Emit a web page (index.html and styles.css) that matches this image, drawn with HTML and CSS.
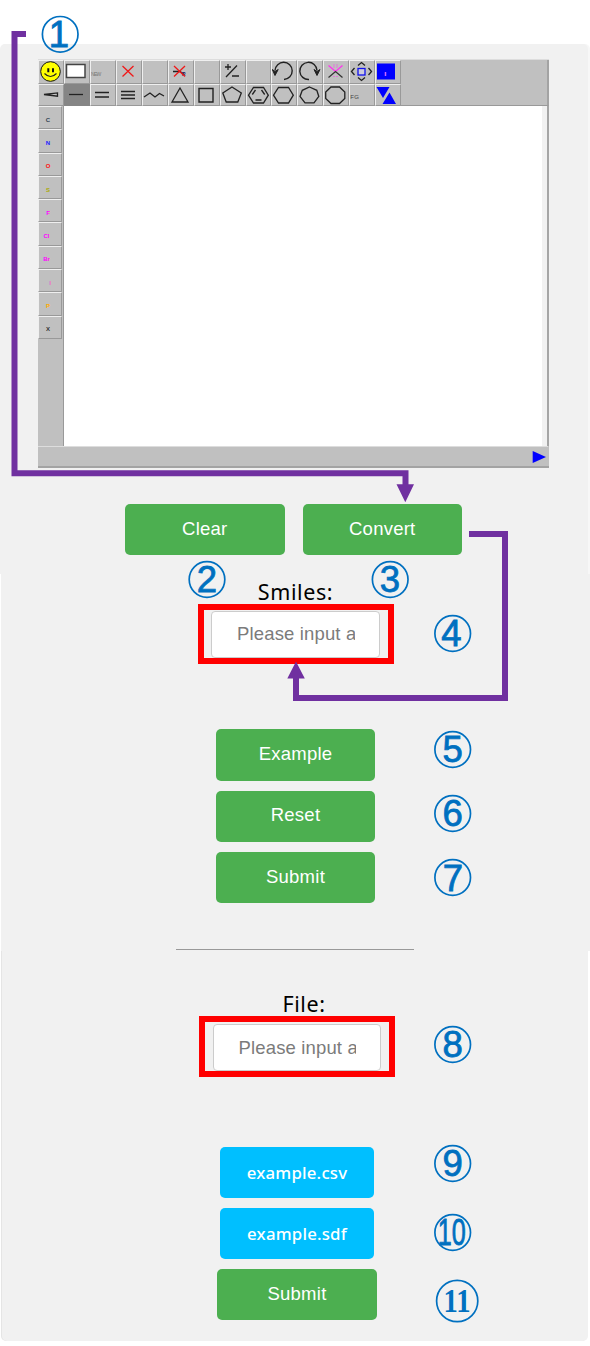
FILE: index.html
```html
<!DOCTYPE html>
<html lang="en">
<head>
<meta charset="utf-8">
<title>Structure input</title>
<link rel="stylesheet" href="styles.css">
</head>
<body>
<main class="page">
  <section class="panel draw">
    <div class="editor">
      <div class="toolbar">
        <div class="cell"><svg viewBox="0 0 26 23"><circle cx="11.500" cy="10.500" r="9.800" fill="#ff0" stroke="#111"/><path d="M9.300 7.300v4M14 7.300v4" stroke="#111" stroke-width="2"/><path d="M5.500 12.500q6 6 12 0" fill="none" stroke="#222" stroke-width="1.100"/></svg></div>
        <div class="cell"><svg viewBox="0 0 26 23"><rect x="1.500" y="3.500" width="18.500" height="13" fill="#fff" stroke="#444" stroke-width="1.500"/></svg></div>
        <div class="cell"><span class="tiny new">NEW</span></div>
        <div class="cell"><svg viewBox="0 0 26 23"><path d="M5.500 5l11 10.500M16.500 5l-11 10.500" stroke="#f01818" stroke-width="1.300"/></svg></div>
        <div class="cell"></div>
        <div class="cell"><svg viewBox="0 0 26 23"><path d="M4 10.500h7l4 3" fill="none" stroke="#222" stroke-width="1.300"/><text x="13" y="15" font-size="5" fill="#226">R</text><path d="M5 5l11 10.500M16 5L5 15.500" stroke="#f01818" stroke-width="1.300"/></svg></div>
        <div class="cell"></div>
        <div class="cell"><svg viewBox="0 0 26 23"><path d="M5 16L16 4.500M4 6h6M7 3v6M11 15h7" stroke="#222" stroke-width="1.300"/></svg></div>
        <div class="cell"></div>
        <div class="cell"><svg viewBox="0 0 26 23"><path d="M12 18.500A8.600 8.600 0 1 0 3 9.500" fill="none" stroke="#222" stroke-width="1.400"/><path d="M.3 8.500l2.700 6 3.200-6-3.200 2z" fill="#222" stroke="#222"/></svg></div>
        <div class="cell"><svg viewBox="0 0 26 23"><path d="M11 18.500A8.600 8.600 0 1 1 19 9.500" fill="none" stroke="#222" stroke-width="1.400"/><path d="M16 8.500l3 6 3-6-3 2z" fill="#222" stroke="#222"/></svg></div>
        <div class="cell"><svg viewBox="0 0 26 23"><path d="M4.500 4.500l7 6 7-6" fill="none" stroke="#f3e" stroke-width="1.300"/><path d="M4.500 16.500l7-6 7 6" fill="none" stroke="#333" stroke-width="1.300"/><path d="M10 3.500v3M13 3.500v3M10 15v2M13 15v2" stroke="#f3e" stroke-dasharray="1 1"/></svg></div>
        <div class="cell"><svg viewBox="0 0 26 23"><rect x="8" y="7.500" width="7" height="6.500" fill="#ccd" stroke="#11e" stroke-width="1.300"/><path d="M8 4.500l3.500-3 3.500 3M8 16.500l3.500 3 3.500-3M4.500 7L1.500 10.500l3 3.500M18.500 7l3 3.500-3 3.500" fill="none" stroke="#222" stroke-width="1.300"/></svg></div>
        <div class="cell"><svg viewBox="0 0 26 23"><path d="M1 2.500h18V18.500H1z" fill="#00f"/><path d="M9.500 11v4" stroke="#c6f" stroke-width="1.500"/></svg></div>

        <div class="cell"><svg viewBox="0 0 26 23"><path d="M5 9.500l13.500-1.600v3.300z" fill="none" stroke="#222" stroke-width="1.300"/></svg></div>
        <div class="cell active"><svg viewBox="0 0 26 23"><path d="M4 9.500h14" stroke="#222" stroke-width="1.300"/></svg></div>
        <div class="cell"><svg viewBox="0 0 26 23"><path d="M4 7.500h14M4 12h14" stroke="#222" stroke-width="1.300"/></svg></div>
        <div class="cell"><svg viewBox="0 0 26 23"><path d="M4 6.500h14M4 10h14M4 13.500h14" stroke="#222" stroke-width="1.300"/></svg></div>
        <div class="cell"><svg viewBox="0 0 26 23"><path d="M1 12l6-4 5 4 4.500-3.500 4.500 2.500" fill="none" stroke="#222" stroke-width="1.300"/></svg></div>
        <div class="cell"><svg viewBox="0 0 26 23"><path d="M11 3l8 14H3z" fill="none" stroke="#222" stroke-width="1.300"/></svg></div>
        <div class="cell"><svg viewBox="0 0 26 23"><path d="M4 3.500h14V17H4z" fill="none" stroke="#222" stroke-width="1.400"/></svg></div>
        <div class="cell"><svg viewBox="0 0 26 23"><path d="M11 2l9.300 6-3.500 9H5.200L1.800 8z" fill="none" stroke="#222" stroke-width="1.300"/></svg></div>
        <div class="cell"><svg viewBox="0 0 26 23"><path d="M6.500 2.500h10l4.800 7.700-4.800 7.800h-10l-5-7.800zM5.300 9.500L8.500 5M14.500 5l3.200 4.500M8.500 15h6" fill="none" stroke="#222" stroke-width="1.300"/></svg></div>
        <div class="cell"><svg viewBox="0 0 26 23"><path d="M6.500 2.500h10l4.800 7.700-4.800 7.800h-10l-5-7.800z" fill="none" stroke="#222" stroke-width="1.300"/></svg></div>
        <div class="cell"><svg viewBox="0 0 26 23"><path d="M11.500 2l7.300 3.300 2 6.200-4.800 6.300H7l-5-6.300L4.300 5.300z" fill="none" stroke="#222" stroke-width="1.300"/></svg></div>
        <div class="cell"><svg viewBox="0 0 26 23"><path d="M7 2h8.500l5.300 5v6.500l-5.300 5H7l-5.300-5V7z" fill="none" stroke="#222" stroke-width="1.300"/></svg></div>
        <div class="cell"><span class="tiny fg">FG</span></div>
        <div class="cell"><svg viewBox="0 0 26 23"><path d="M.500 2H13.500L7 13zM6.500 19h13.500L13.500 7.500z" fill="#00f"/></svg></div>
      </div>
      <div class="work">
        <div class="atoms">
          <div class="cell atom c">C</div>
          <div class="cell atom n">N</div>
          <div class="cell atom o">O</div>
          <div class="cell atom s">S</div>
          <div class="cell atom f">F</div>
          <div class="cell atom cl">Cl</div>
          <div class="cell atom br">Br</div>
          <div class="cell atom i">I</div>
          <div class="cell atom p">P</div>
          <div class="cell atom x">X</div>
        </div>
        <div class="canvas"></div>
      </div>
      <div class="status"><svg viewBox="0 0 14 12"><path d="M.700 0l13.300 6-13.300 6z" fill="#00f"/></svg></div>
    </div>
    <div class="actions">
      <button class="btn">Clear</button>
      <button class="btn">Convert</button>
    </div>
  </section>
  <section class="panel smiles">
    <label class="label smiles-label">Smiles:</label>
    <div class="marked"><div class="field"><span>Please input a</span></div></div>
    <div class="stack">
      <button class="btn">Example</button>
      <button class="btn">Reset</button>
      <button class="btn">Submit</button>
    </div>
    <div class="rule"></div>
  </section>
  <section class="panel file">
    <label class="label file-label">File:</label>
    <div class="marked"><div class="field"><span>Please input a</span></div></div>
    <div class="stack">
      <a class="btn link">example.csv</a>
      <a class="btn link">example.sdf</a>
      <button class="btn">Submit</button>
    </div>
  </section>

  <svg class="notes" viewBox="0 0 590 1346">
    <g fill="none" stroke="#7030a0" stroke-width="6">
      <path d="M26 34H14.500V473.300H405.500V487"/>
      <path d="M469 534H505V698H296V676"/>
    </g>
    <path d="M396.500 484.300h17.500L405.300 502.300zM287.300 678.500h17.500L296 661.500z" fill="#7030a0"/>
    <g class="rings">
      <circle cx="60.200" cy="34.300" r="17.800"/><circle cx="207" cy="579.500" r="17.800"/><circle cx="390.200" cy="579.500" r="17.800"/>
      <circle cx="452.700" cy="633.500" r="17.800"/><circle cx="452.700" cy="749.500" r="17.800"/><circle cx="452.700" cy="813.500" r="17.800"/>
      <circle cx="452.700" cy="877.500" r="17.800"/><circle cx="452.700" cy="1044.500" r="17.800"/><circle cx="452.700" cy="1163.500" r="17.800"/>
      <circle cx="452.700" cy="1232.500" r="17.800"/><circle cx="457.200" cy="1301" r="20.600"/>
    </g>
    <g class="digits">
      <text x="59" y="47.300">1</text><text x="207" y="591.700">2</text><text x="390" y="591.700">3</text>
      <text x="451.500" y="646">4</text><text x="452.700" y="762">5</text><text x="452.700" y="826">6</text>
      <text x="452.900" y="890.500">7</text><text x="452.700" y="1057">8</text><text x="452.700" y="1176">9</text>
      <text x="451.700" y="1245.300" textLength="28" lengthAdjust="spacingAndGlyphs">10</text>
      <text class="serif" x="457" y="1312.300" textLength="27" lengthAdjust="spacingAndGlyphs">11</text>
    </g>
  </svg>
</main>
</body>
</html>
```
FILE: styles.css
```css
* { box-sizing: border-box; }
body { margin: 0; background: #fff; font-family: "Liberation Sans", Arial, sans-serif; }
.page { position: relative; width: 590px; height: 1346px; padding-top: 44px; overflow: hidden; }
.panel { display: flex; flex-direction: column; background: #f1f1f1; }
.draw { width: 588px; height: 530px; padding-top: 15px; border-radius: 5px 5px 0 0; box-shadow: 2px 0 0 #f7f7f7; }
.smiles { height: 377px; margin-left: 1px; align-items: center; padding: 3px 0 0; }
.file { width: 586px; height: 390px; margin-left: 2px; align-items: center; border-radius: 0 0 5px 5px; box-shadow: -1px 0 0 #e5e5e5; }

.editor { width: 511px; height: 409px; margin-left: 38px; background: #c0c0c0; border-top: 1px solid #ddd; border-bottom: 2px solid #a3a3a3; display: flex; flex-direction: column; }
.toolbar { height: 46px; display: grid; grid-template-columns: repeat(14, 25.950px); grid-template-rows: 23.5px 22.5px; border-right: 2px solid #a3a3a3; border-bottom: 1px solid #999; }
.cell { border: 1px solid #efefef; border-right: 1px solid #999; border-bottom: 1px solid #999; overflow: hidden; display: flex; }
.cell svg { width: 26px; height: 23px; flex: none; }
.cell svg text { font-weight: bold; }
.active { background: #858585; border-color: #858585; }
.tiny { font-size: 5px; line-height: 6px; color: #777; }
.new { padding: 9.500px 0 0 0; letter-spacing: -.6px; }
.fg { padding: 9px 0 0 0; color: #444; font-size: 6px; }
.work { display: flex; height: 340px; }
.atoms { width: 26px; padding-right: 1px; border-right: 1px solid #999; display: grid; grid-template-rows: repeat(10, 23.300px); }
.atom { justify-content: center; align-items: center; font-size: 6px; font-weight: bold; padding: 4px 4px 0 0; }
.c { color: #345; } .n { color: #22f; } .o { color: #f11; } .s { color: #aa0; }
.f, .cl, .br { color: #f0f; } .cl, .br { padding-right: 7px; }
.i { color: #e6c; padding-right: 0; } .p { color: #fa0; } .x { color: #333; }
.canvas { flex: 1; background: #fff; border-right: 2px solid #a5a5a5; box-shadow: inset -5px 0 0 #f1f1f1; }
.status { flex: 1; display: flex; justify-content: flex-end; align-items: center; padding-right: 2px; border-top: 1px solid #ddd; margin-right: 1px; }
.status svg { width: 14px; height: 12px; }

.actions { display: flex; gap: 18px; margin: 36px 0 0 125px; }
.btn { width: 159.500px; height: 51.300px; padding: 0 0 2px; border: 0; border-radius: 5px; background: #4caf50; color: #fff; font: 18.500px "Liberation Sans", Arial, sans-serif; letter-spacing: .25px; text-align: center; }
.link { width: 154.500px; background: #00bfff; font: 500 16.800px/52px "Noto Sans", "Open Sans", sans-serif; letter-spacing: .2px; }
.label { font: 21.500px/30px "Noto Sans", "Open Sans", sans-serif; color: #000; height: 30px; letter-spacing: .6px; }
.smiles-label { height: 27px; }
.marked { width: 196px; height: 60px; border: 6px solid #f00; padding: 1px 8px 0 7.500px; }
.field { width: 168.500px; height: 47px; border: 1px solid #ccc; border-radius: 4px; background: #fff; padding: 0 24px 0 25px; }
.field span { display: block; overflow: hidden; width: 117.500px; white-space: nowrap; color: #7b7b7b; font-size: 18.500px; line-height: 43px; letter-spacing: .15px; }
.stack { display: flex; flex-direction: column; align-items: center; gap: 10px; margin-top: 65.300px; }
.rule { width: 238px; height: 1px; margin: 46px 1px 0 0; background: #999; }
.file .label { margin: 38px 0 0 18px; height: 27px; }
.file .marked { height: 61px; width: 196px; margin-left: 4px; padding-top: 2px; }
.file .field span { line-height: 45px; }
.file .stack { margin-top: 69.500px; margin-left: 4px; }

.fg { letter-spacing: .3px; }
.notes { position: absolute; left: 0; top: 0; width: 590px; height: 1346px; pointer-events: none; }
.rings { fill: none; stroke: #0070c0; stroke-width: 1.700; }
.digits { fill: #0070c0; stroke: #0070c0; stroke-width: .8; font: 36.500px "Liberation Sans", Arial, sans-serif; text-anchor: middle; }
.serif { font: bold 33px "Liberation Serif", serif; stroke: none; }
```
